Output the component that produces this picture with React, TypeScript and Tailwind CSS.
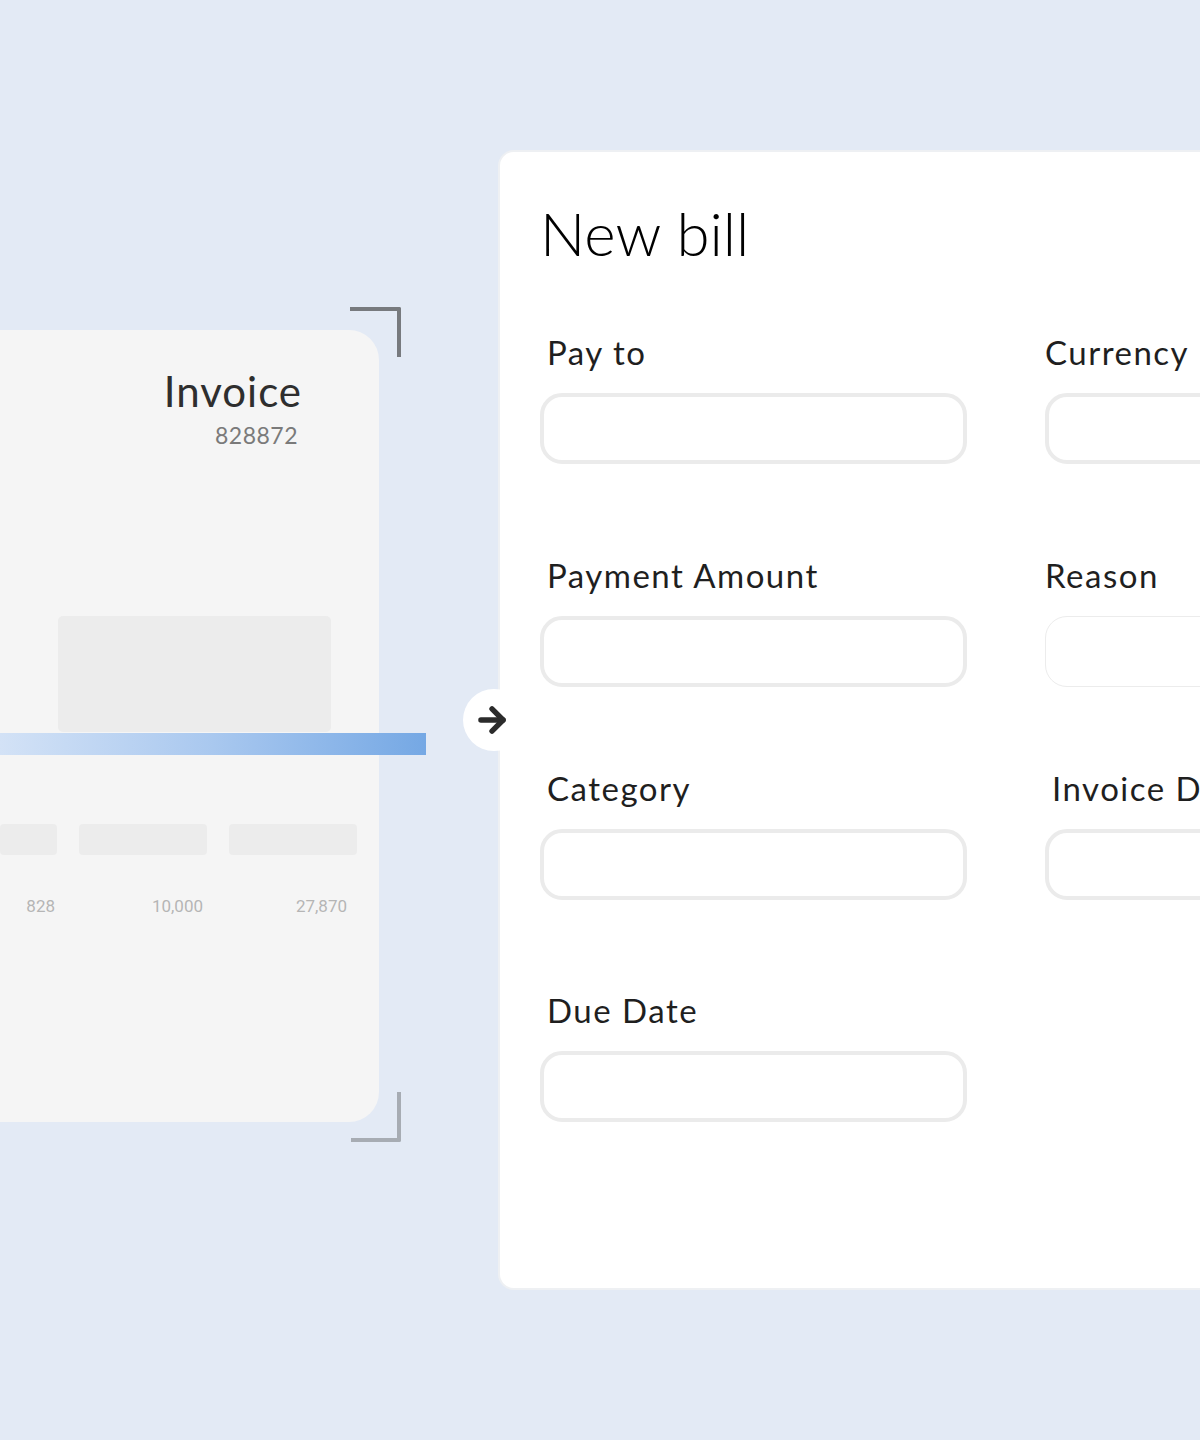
import { ArrowRight } from "lucide-react";

const leftRows = [
  { w: "w-[57px]", ml: "ml-0", mr: "mr-[2px]", value: "828" },
  { w: "w-[128px]", ml: "ml-[22px]", mr: "mr-[4px]", value: "10,000" },
  { w: "w-[128px]", ml: "ml-[22px]", mr: "mr-[10px]", value: "27,870" },
];

const Field = ({
  label,
  thin,
  labelPad = "pl-[7px]",
  className = "",
}: {
  label: string;
  thin?: boolean;
  labelPad?: string;
  className?: string;
}) => (
  <div className={className}>
    <p
      className={`text-[33px] leading-[40px] tracking-[1.5px] text-[#1f1f1f] whitespace-nowrap ${labelPad}`}
    >
      {label}
    </p>
    <div
      className={`mt-[21px] h-[71px] rounded-[22px] bg-white ${
        thin ? "border border-[#ececec]" : "border-4 border-[#ebebeb]"
      }`}
    />
  </div>
);

const InvoiceCard = () => (
  <div className="relative mt-[178px] w-[379px] h-[792px]">
    <div className="h-full rounded-r-[30px] bg-[#f5f5f5] flex flex-col">
      <div className="flex flex-col items-end pr-[77px] pt-[36px]">
        <p className="text-[42px] leading-[50px] text-[#2e2e2e] tracking-[1px]">Invoice</p>
        <p className="mt-[5px] mr-[4px] text-[23px] leading-[28px] text-[#7a7a7a] tracking-[0.5px]">
          828872
        </p>
      </div>
      <div className="ml-[58px] mt-[167px] w-[273px] h-[116px] rounded-[5px] bg-[#ececec]" />
      <div className="mt-[92px] flex">
        {leftRows.map((r) => (
          <div key={r.value} className={`${r.w} ${r.ml} flex flex-col items-end`}>
            <div className="w-full h-[31px] rounded-[4px] bg-[#ececec]" />
            <span
              className={`mt-[41px] ${r.mr} text-[17px] leading-[20px] text-[#b5b5b5]`}
              style={{ fontFamily: "Roboto, sans-serif" }}
            >
              {r.value}
            </span>
          </div>
        ))}
      </div>
    </div>

    {/* scanner corners */}
    <div className="absolute left-[350px] top-[-23px] w-[51px] h-[50px] border-t-4 border-r-4 border-[#777a7e] rounded-tr-[2px]" />
    <div className="absolute left-[351px] top-[762px] w-[50px] h-[50px] border-b-4 border-r-4 border-[#a7acb3] rounded-br-[2px]" />

    {/* scan line */}
    <div className="absolute left-0 top-[403px] w-[426px] h-[22px] bg-gradient-to-r from-[#d3e2f6] via-[#a9c8ef] to-[#75a8e4]" />
  </div>
);

export default function App() {
  return (
    <div
      className="w-[1200px] h-[1440px] overflow-hidden bg-[#e3eaf5] pt-[152px]"
      style={{ fontFamily: "Lato, 'Noto Sans', sans-serif" }}
    >
      <div className="flex items-start">
        <div className="w-[500px] shrink-0">
          <InvoiceCard />
        </div>

        <div className="relative w-[760px] shrink-0 h-[1136px] rounded-[14px] bg-white shadow-[0_0_0_2px_#eef0f3]">
          <div className="absolute left-[-37px] top-[537px] w-[62px] h-[62px] rounded-full bg-white flex items-center justify-start pl-[10px]">
            <ArrowRight size={38} strokeWidth={3.4} className="text-[#2b2b2b]" />
          </div>

          <div className="pl-[40px] pt-[46px]">
            <h1 className="text-[60px] leading-[70px] font-light text-black">New bill</h1>

            <div className="mt-[64px] grid grid-cols-[427px_427px] gap-x-[78px]">
              <Field label="Pay to" />
              <Field label="Currency" labelPad="pl-0" />
              <Field label="Payment Amount" className="mt-[91px]" />
              <Field label="Reason" thin labelPad="pl-0" className="mt-[91px]" />
              <Field label="Category" className="mt-[81px]" />
              <Field label="Invoice Date" labelPad="pl-[7px]" className="mt-[81px]" />
              <Field label="Due Date" className="mt-[90px]" />
            </div>
          </div>
        </div>
      </div>
    </div>
  );
}
